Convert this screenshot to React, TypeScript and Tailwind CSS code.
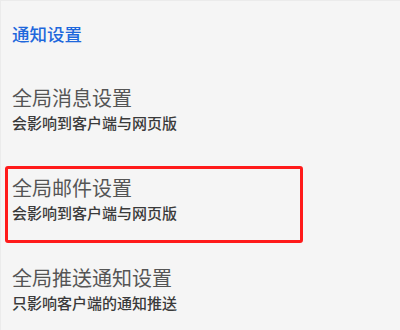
const items = [
  { title: '全局消息设置', desc: '会影响到客户端与网页版', active: false },
  { title: '全局邮件设置', desc: '会影响到客户端与网页版', active: true },
  { title: '全局推送通知设置', desc: '只影响客户端的通知推送', active: false },
];

export default function App() {
  return (
    <div
      className="w-[400px] h-[330px] overflow-hidden bg-[#f5f5f5] border-l border-t border-[#ebebeb]"
      style={{ fontFamily: '"Noto Sans CJK SC", "Noto Sans", sans-serif' }}
    >
      {/* 标题 */}
      <div className="pt-[21px] pl-[11px] text-[17.5px] leading-[24px] text-[#1f68dc] font-medium">通知设置</div>

      <div className="pl-[4px]">
        {items.map((item) => (
          <div
            key={item.title}
            className={
              item.active
                ? 'mt-[13px] w-[298px] h-[77px] rounded-[3px] border-[3px] border-[#ff1a1a] pt-[7px] pl-[4px]'
                : 'mt-[13px] first:mt-[30px] w-[298px] h-[77px] rounded-[3px] border-[3px] border-transparent pt-[7px] pl-[4px]'
            }
          >
            <div className="text-[20px] leading-[24px] text-[#555555]">{item.title}</div>
            <div className="mt-[3px] text-[15px] leading-[20px] text-[#3a3a3a] font-medium">{item.desc}</div>
          </div>
        ))}
      </div>
    </div>
  );
}
